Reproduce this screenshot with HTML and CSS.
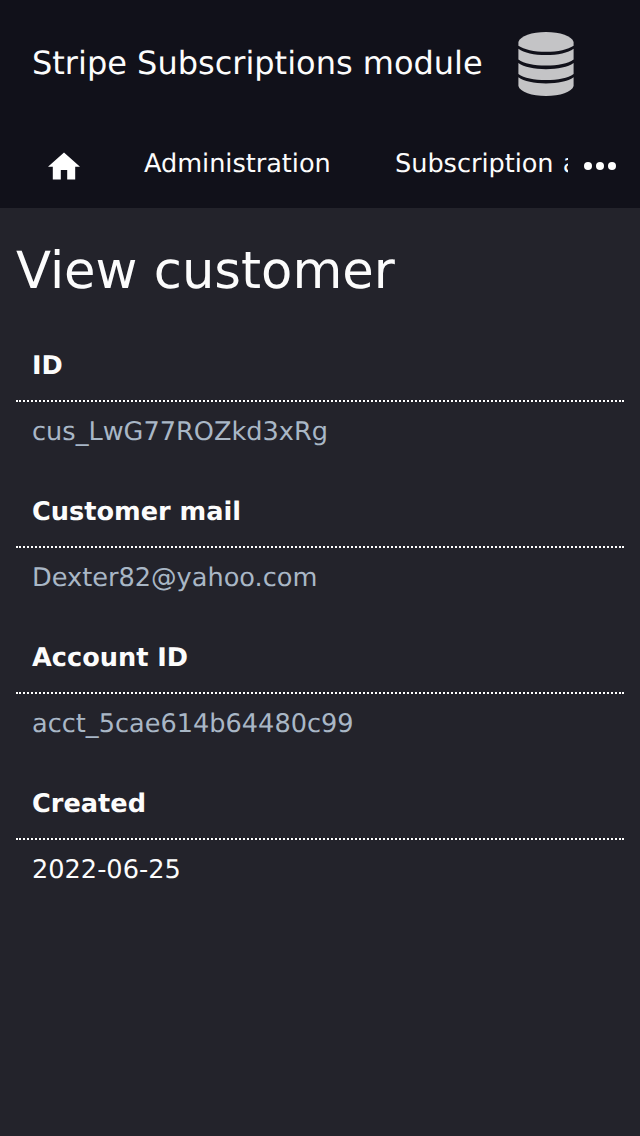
FILE: index.html
```html
<!DOCTYPE html>
<html lang="en">
<head>
<meta charset="utf-8">
<title>View customer</title>
<link rel="stylesheet" href="styles.css">
</head>
<body>
<header class="header">
  <div class="brand">
    <span class="brand-name">Stripe Subscriptions module</span>
    <svg class="brand-logo" viewBox="0 0 56 64" aria-hidden="true">
      <path d="M.4 10C2 4 14 0 28 0S54 4 55.600 10V13.700C50 17.500 40 19.800 28 19.800S6 17.500 .4 13.700Z"/>
      <path d="M.4 16.700C6 20.800 16 23 28 23S50 20.800 55.600 16.700V27.500C50 31.500 40 33.500 28 33.500S6 31.500 .4 27.500Z"/>
      <path d="M.4 31C6 35 16 37.200 28 37.200S50 35 55.600 31V42C50 46 40 48 28 48S6 46 .4 42Z"/>
      <path d="M.4 45.300C6 49.300 16 51.500 28 51.500S50 49.300 55.600 45.300V54C54 60 42 64 28 64S2 60 .4 54Z"/>
    </svg>
  </div>
  <nav class="nav">
    <a class="home"><svg viewBox="0 0 32 28" aria-hidden="true"><path d="M12.800 27.600V18H19.200V27.600H27.200V14.800H32L16 .4L0 14.800H4.800V27.600Z"/></svg></a>
    <a class="nav-link">Administration</a>
    <a class="nav-link nav-clip">Subscription administration</a>
    <svg class="more" viewBox="0 0 32 8" aria-hidden="true"><circle cx="4" cy="4" r="4"/><circle cx="16" cy="4" r="4"/><circle cx="28" cy="4" r="4"/></svg>
  </nav>
</header>
<main class="content">
  <h1 class="title">View customer</h1>
  <dl class="details">
    <dt>ID</dt><dd>cus_LwG77ROZkd3xRg</dd>
    <dt>Customer mail</dt><dd>Dexter82@yahoo.com</dd>
    <dt>Account ID</dt><dd>acct_5cae614b64480c99</dd>
    <dt>Created</dt><dd class="plain">2022-06-25</dd>
  </dl>
</main>
</body>
</html>
```
FILE: styles.css
```css
* { box-sizing: border-box; }
body { margin: 0; min-height: 1136px; background: #23232b; color: #fcfcfc; font: 26px/38px "DejaVu Sans", sans-serif; text-rendering: geometricPrecision; }
.header { height: 208px; background: #11111a; }
.brand { display: flex; align-items: center; height: 128px; padding-left: 32px; }
.brand-name { width: 486px; padding-bottom: 2px; font-size: 32px; white-space: nowrap; }
.brand-logo { width: 56px; height: 64px; fill: #c4c4c6; }
.nav { display: flex; height: 80px; padding: 16px 24px 0 48px; }
.home { width: 96px; padding-top: 8px; }
.home svg { display: block; width: 32px; height: 28px; fill: #fff; }
.nav-link { width: 251px; padding-top: 1px; font-size: 25.600px; letter-spacing: -.04px; white-space: nowrap; }
.nav-clip { width: 173px; overflow: hidden; word-spacing: 1px; }
.more { width: 32px; height: 8px; margin: 18px 0 0 16px; fill: #fff; }
.content { padding: 33px 16px; }
.title { margin: 0; font-size: 51.200px; font-weight: 400; line-height: 60px; }
.details { margin: 29px 0 0; font-size: 25.600px; }
.details dt { height: 72px; padding: 17px 16px 0; border-bottom: 2px dotted #fff; font-weight: 700; }
.details dd { height: 74px; margin: 0; padding: 11px 16px 0; color: #a9b7c6; }
.details .plain { color: #fcfcfc; }
```
